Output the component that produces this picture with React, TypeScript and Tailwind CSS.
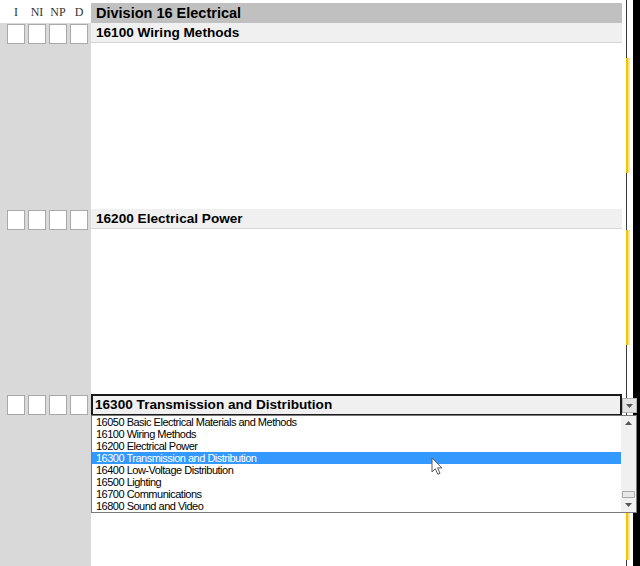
import React from 'react';

const LABELS = ['I', 'NI', 'NP', 'D'];

const OPTIONS = [
  '16050 Basic Electrical Materials and Methods',
  '16100 Wiring Methods',
  '16200 Electrical Power',
  '16300 Transmission and Distribution',
  '16400 Low-Voltage Distribution',
  '16500 Lighting',
  '16700 Communications',
  '16800 Sound and Video',
];

function Boxes() {
  return (
    <div className="w-[91px] shrink-0 bg-[#d9d9d9] flex gap-[3px] pl-[7px] pt-[1px]">
      {LABELS.map(l => (
        <div key={l} className="w-[18px] h-[20px] bg-white border border-[#a9a9a9]" />
      ))}
    </div>
  );
}

function Section({ title, height }: { title: string; height: string }) {
  return (
    <div className={`flex ${height}`}>
      <Boxes />
      <div className="flex-1">
        <div className="h-[20px] bg-[#f0f0f0] border-b border-[#d6d6d6] pl-[5px] text-[13.6px] font-bold leading-[19px] text-black">
          {title}
        </div>
      </div>
    </div>
  );
}

function Cursor() {
  return (
    <svg className="absolute left-[431px] top-[457px]" width="13" height="19" viewBox="0 0 13 19">
      <path
        d="M1 1 L1 15 L4.3 11.8 L6.8 17.3 L9 16.3 L6.6 10.9 L11 10.9 Z"
        fill="#ffffff"
        stroke="#5a5a5a"
        strokeWidth="1"
        strokeLinejoin="round"
      />
    </svg>
  );
}

function SelectSection() {
  return (
    <div className="flex flex-1">
      <Boxes />
      <div className="flex-1 relative">
        <div className="h-[22px] bg-[#f0f0f0] border-2 border-[#1a1a1a] pl-[2px] text-[13.6px] font-bold leading-[18px] text-black">
          16300 Transmission and Distribution
        </div>
        {/* dropdown button */}
        <div className="absolute left-[531px] top-[4px] w-[15px] h-[15px] bg-[#e4e4e4] border border-[#b4b4b4] flex items-center justify-center">
          <svg width="7" height="4" viewBox="0 0 7 4">
            <path d="M0 0 L7 0 L3.5 4 Z" fill="#555" />
          </svg>
        </div>
        {/* option list */}
        <div className="absolute left-0 top-[21px] w-[546px] h-[98px] bg-white border border-[#7a7a7a] flex">
          <div className="flex-1 flex flex-col">
            {OPTIONS.map((o, i) => (
              <div
                key={o}
                className={`h-[12px] pl-[4px] text-[11px] leading-[12px] tracking-[-0.5px] whitespace-nowrap ${
                  i === 3 ? 'bg-[#3399ff] text-white' : 'text-black'
                }`}
              >
                {o}
              </div>
            ))}
          </div>
          {/* scrollbar */}
          <div className="w-[15px] bg-[#f0f0f0] flex flex-col items-center">
            <div className="h-[14px] flex items-center justify-center">
              <svg width="7" height="4" viewBox="0 0 7 4">
                <path d="M0 4 L7 4 L3.5 0 Z" fill="#555" />
              </svg>
            </div>
            <div className="flex-1" />
            <div className="w-[13px] h-[7px] bg-[#e8e8e8] border border-[#a8a8a8] rounded-[1px]" />
            <div className="h-[14px] flex items-center justify-center">
              <svg width="7" height="4" viewBox="0 0 7 4">
                <path d="M0 0 L7 0 L3.5 4 Z" fill="#555" />
              </svg>
            </div>
          </div>
        </div>
      </div>
    </div>
  );
}

function Line({ h }: { h: string }) {
  return <div className={`${h} w-[1px] bg-[#3a3a3a]`} />;
}

function Yellow() {
  return (
    <div className="h-[115px] w-[4px] flex">
      <div className="w-[2px] bg-[#f2c300]" />
      <div className="w-[2px] bg-[#ffe67a]" />
    </div>
  );
}

function Rail() {
  return (
    <div className="w-[11px] shrink-0 pl-[4px] flex flex-col">
      <Line h="h-[58px]" />
      <Yellow />
      <Line h="h-[57px]" />
      <Yellow />
      <Line h="h-[100px]" />
      <Yellow />
      <Line h="flex-1" />
    </div>
  );
}

export default function App() {
  return (
    <div className="relative w-[640px] h-[566px] overflow-hidden bg-white flex font-['Liberation_Sans',Arial,sans-serif]">
      <div className="w-[622px] shrink-0 flex flex-col">
        {/* header row */}
        <div className="flex h-[23px]">
          <div className="w-[91px] shrink-0 flex gap-[3px] pl-[7px] pt-[5px] font-['Liberation_Serif',serif] text-[12px] leading-[14px] text-[#333]">
            {LABELS.map(l => (
              <div key={l} className="w-[18px] text-center">
                {l}
              </div>
            ))}
          </div>
          <div className="flex-1 mt-[3px] bg-[#c0c0c0] pl-[5px] text-[14.5px] font-bold leading-[20px] text-black">
            Division 16 Electrical
          </div>
        </div>
        <Section title="16100 Wiring Methods" height="h-[186px]" />
        <Section title="16200 Electrical Power" height="h-[185px]" />
        <SelectSection />
      </div>
      <Rail />
      <div className="flex-1 bg-black" />
      <Cursor />
    </div>
  );
}
